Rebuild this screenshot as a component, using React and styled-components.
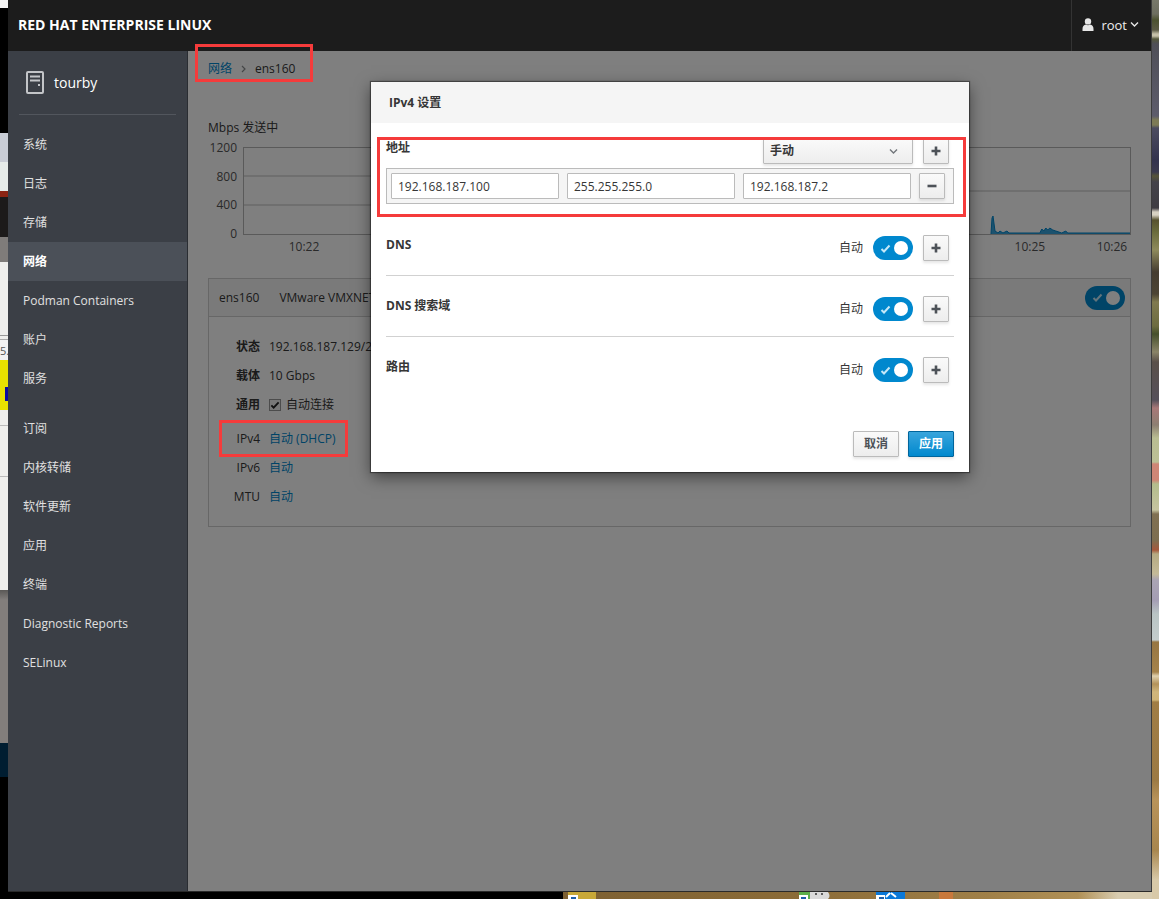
import React, { useState } from 'react';
import styled, { createGlobalStyle } from 'styled-components';

const GlobalStyle = createGlobalStyle`
  * {
    box-sizing: border-box;
  }

  body {
    margin: 0;
    font-family: "Open Sans", "Noto Sans CJK SC", sans-serif;
    font-size: 12px;
    line-height: 20px;
    color: #363636;
  }

  button, input, select {
    font: inherit;
    color: inherit;
    margin: 0;
  }

  a {
    color: #0088ce;
    text-decoration: none;
  }
`;

const Desktop = styled.div`
  display: grid;
  grid-template-columns: 8px 1fr 7px;
  grid-template-rows: 1fr 7px;
  min-height: 100vh;
`;

const LeftEdge = styled.div`
  grid-row: 1 / 3;
  overflow: hidden;
  padding-top: 341px;
  font-size: 11px;
  color: #555;
  background: linear-gradient(
    #f4f4f4 8px, #000 8px 133px, #c9cdd6 133px 162px, #e6ebe9 162px 191px,
    #8c2413 191px 197px, #1c1a1a 197px 237px, #7f7c7a 237px 262px, #efefed 262px 335px,
    #999 335px 336px, #efefed 336px 339px, #aaa 339px 340px, #f2f2f2 340px 360px,
    #e8e000 360px 410px, #efefed 410px 425px, #bbb 425px 426px, #efefed 426px 476px,
    #bbb 476px 477px, #efefed 477px 590px, #5a5856 590px, #827e7c 600px 743px,
    #001d31 743px 777px, #000 777px
  );
`;

const Flag = styled.div`
  width: 3px;
  height: 14px;
  margin: 26px 0 0 5px;
  background: #0a0aa0;
`;

const RightEdge = styled.div`
  grid-row: 1 / 3;
  grid-column: 3;
  background: linear-gradient(
    #77786a 0, #6d6e60 14px, #4c5230 20px, #5c5b45 30px, #c5c0a8 34px 36px, #55583c 39px,
    #4f4f58 44px, #5d5c6b 116px, #7d7b56 120px 125px, #4c4c60 128px, #33334e 160px,
    #3b3a4e 172px, #565438 176px, #44434a 182px, #3e3c42 208px, #d8d2c3 212px 215px,
    #57522f 220px, #6a6c3c 232px, #8e8a5c 250px, #453c30 272px, #4c4434 294px,
    #807a50 302px, #6d6c40 326px, #46502c 334px, #8a8468 352px, #5a504a 362px, #55505a 400px,
    #a87878 408px, #8d7f72 425px, #b9bd92 438px, #bcc096 462px, #cf8676 464px 480px,
    #b3bd8c 484px, #c6c4a0 510px, #807052 514px, #7d6e50 540px, #a5583c 550px, #b5aa82 554px,
    #c4ba98 574px, #aaa4b4 580px, #a49db4 600px, #b9c4c4 614px, #c4cccc 640px,
    #977642 642px, #a5834b 672px, #e0d1ae 676px, #b3925a 684px, #d0b67c 692px,
    #cfb477 700px, #a07d45 702px, #9c7a44 780px, #b8935a 800px, #a8864e 850px, #d8c9a8 880px
  );
`;

const BottomEdge = styled.div`
  grid-column: 2;
  display: grid;
  grid-template-columns: 555px 5px 28px 203px 31px 46px 29px 34px 14px 1fr;
  background: linear-gradient(90deg, #7d6032 555px, #8c6c38 800px, #a08048 980px, #b09056 1070px, #d8ccb0 1110px);
`;

const Tile = styled.div`
  background: ${({ color }) => color || 'transparent'};

  svg {
    display: block;
  }
`;

const Window = styled.div`
  display: grid;
  grid-template-columns: 180px 1fr;
  grid-template-rows: 51px 1fr;
  border-right: 1px solid #3c3c3c;
  border-bottom: 1px solid #2a2a2a;
`;

const TopBar = styled.header`
  grid-column: 1 / 3;
  display: flex;
  justify-content: space-between;
  align-items: stretch;
  background: #1c1c1c;
  color: #fff;
`;

const Brand = styled.div`
  padding: 15px 10px;
  font-size: 14px;
  font-weight: 700;
`;

const UserMenu = styled.button`
  display: flex;
  align-items: center;
  gap: 7px;
  padding: 0 12px 2px 10px;
  border: 0;
  border-left: 1px solid #333;
  background: transparent;
  color: #eee;
  font-size: 13px;

  svg:last-child {
    margin-left: -4px;
  }
`;

const Sidebar = styled.nav`
  background: #3b3f46;
  border-right: 1px solid #2a2d32;
  color: #e4e4e4;
`;

const Host = styled.a`
  display: flex;
  align-items: center;
  gap: 10px;
  height: 64px;
  margin: 0 11px 10px;
  padding-left: 7px;
  border-bottom: 1px solid #52565d;
  color: #fff;
  font-size: 14px;
`;

const NavList = styled.ul`
  list-style: none;
  margin: 0 0 11px;
  padding: 0;
`;

const NavLink = styled.a`
  display: block;
  padding: 10px 15px 9px;
  color: ${({ $active }) => ($active ? '#fff' : '#e0e0e0')};
  font-weight: ${({ $active }) => ($active ? 700 : 400)};
  background: ${({ $active }) => ($active ? '#4b5058' : 'transparent')};
`;

const Main = styled.main`
  position: relative;
  padding: 8px 20px 20px;
  background: #fff;
`;

const Highlight = styled.span`
  position: absolute;
  inset: ${({ $inset }) => $inset};
  z-index: 5;
  border: 3px solid #f53b3b;
  pointer-events: none;
`;

const Breadcrumb = styled.div`
  position: relative;
  display: inline-flex;
  align-items: center;
  gap: 9px;
`;

const Charts = styled.div`
  display: grid;
  grid-template-columns: 1fr 1fr;
  gap: 36px;
  margin-top: 39px;
`;

const ChartTitle = styled.div`
  height: 20px;
`;

const ChartBody = styled.div`
  display: grid;
  grid-template-columns: 29px 1fr;
  column-gap: 6px;
`;

const YAxis = styled.div`
  display: flex;
  flex-direction: column;
  justify-content: space-between;
  height: 106px;
  margin-bottom: -10px;
  text-align: right;
  color: #545454;
`;

const Plot = styled.svg`
  display: block;
  width: 100%;
  height: 88px;
  margin-top: 9px;
  border: 1px solid #b4b4b4;
`;

const XAxis = styled.div`
  grid-column: 2;
  display: grid;
  grid-template-columns: repeat(5, 1fr);
  height: 20px;
  margin: 2px -22px 0 20px;
  text-align: center;
  color: #545454;
`;

const Panel = styled.section`
  margin-top: 21px;
  border: 1px solid #cfcfcf;
`;

const PanelHeader = styled.div`
  display: flex;
  align-items: center;
  gap: 20px;
  height: 38px;
  padding: 0 5px 0 10px;
  background: #f5f5f5;
  border-bottom: 1px solid #cfcfcf;

  > :last-child {
    margin-left: auto;
  }
`;

const Details = styled.dl`
  margin: 0;
  padding: 15px 0;
`;

const DetailRow = styled.div`
  display: grid;
  grid-template-columns: 51px 1fr;
  gap: 9px;
  align-items: center;
  height: ${({ $tall }) => ($tall ? 34 : 29)}px;
  padding-bottom: ${({ $tall }) => ($tall ? 4 : 0)}px;

  dt {
    text-align: right;
    font-weight: ${({ $strong }) => ($strong ? 700 : 400)};
  }

  dd {
    margin: 0;
    justify-self: start;
  }
`;

const LinkCell = styled.dd`
  position: relative;
`;

const CheckLabel = styled.label`
  display: flex;
  align-items: center;
  gap: 5px;
`;

const CheckBox = styled.input`
  appearance: none;
  width: 12px;
  height: 12px;
  border: 1px solid #999;
  background: #f0f0f0;
`;

const CheckWrap = styled.span`
  display: grid;
  align-items: center;
  justify-items: center;

  > * {
    grid-area: 1 / 1;
  }
`;

const SwitchInput = styled.input`
  appearance: none;
  display: flex;
  align-items: center;
  justify-content: ${({ checked }) => (checked ? 'flex-end' : 'flex-start')};
  width: 40px;
  height: 24px;
  padding: 0 5px;
  border-radius: 12px;
  background: ${({ checked }) => (checked ? '#0088ce' : '#bbb')};

  &::before {
    content: "";
    width: 14px;
    height: 14px;
    border-radius: 50%;
    background: #fff;
  }
`;

const SwitchWrap = styled.span`
  display: grid;
  align-items: center;

  > * {
    grid-area: 1 / 1;
  }

  svg {
    margin-left: 7px;
    pointer-events: none;
  }
`;

const Backdrop = styled.div`
  position: absolute;
  inset: 0;
  z-index: 2;
  display: flex;
  justify-content: center;
  align-items: flex-start;
  padding: 31px 0 0 1px;
  background: rgba(0, 0, 0, 0.5);
`;

const Dialog = styled.div`
  width: 598px;
  max-width: 100%;
  background: #fff;
  box-shadow: 0 0 1px 1px rgba(0, 0, 0, 0.4), 0 5px 15px rgba(0, 0, 0, 0.5);
`;

const DialogTitle = styled.h2`
  margin: 0;
  padding: 11px 18px 10px;
  background: #f5f5f5;
  font-size: 12px;
  line-height: 20px;
`;

const DialogBody = styled.div`
  padding: 15px 15px 0;
`;

const AddressBlock = styled.div`
  position: relative;
  margin-bottom: 11px;
`;

const Setting = styled.div`
  display: flex;
  align-items: flex-start;
  padding: ${({ $first }) => ($first ? '0 5px 4px 0' : '20px 5px 14px 0')};
  border-bottom: ${({ $line }) => ($line ? '1px solid #d1d1d1' : '0')};
`;

const SettingName = styled.strong`
  flex: 1;
`;

const SettingControls = styled.div`
  display: flex;
  align-items: center;
  gap: 10px;
`;

const AutoLabel = styled.label`
  display: flex;
  align-items: center;
  gap: 10px;
  height: 26px;
`;

const SelectWrap = styled.span`
  display: grid;
  align-items: center;

  > * {
    grid-area: 1 / 1;
  }

  svg {
    justify-self: end;
    margin-right: 15px;
    pointer-events: none;
  }
`;

const Select = styled.select`
  appearance: none;
  width: 150px;
  height: 26px;
  padding: 0 6px;
  border: 1px solid #bbb;
  border-radius: 1px;
  background: linear-gradient(#fafafa, #ededed);
  box-shadow: 0 2px 3px rgba(3, 3, 3, 0.1);
  font-weight: 600;
`;

const Button = styled.button`
  height: 26px;
  padding: 0 10px;
  border: 1px solid ${({ $primary }) => ($primary ? '#00659c' : '#bbb')};
  border-radius: 1px;
  background: ${({ $primary }) => ($primary ? 'linear-gradient(#39a5dc, #0088ce)' : 'linear-gradient(#fafafa, #ededed)')};
  box-shadow: 0 2px 3px rgba(3, 3, 3, 0.1);
  color: ${({ $primary }) => ($primary ? '#fff' : '#4d5258')};
  font-weight: 600;
  line-height: 18px;
`;

const IconButton = styled(Button)`
  display: grid;
  place-items: center;
  width: 26px;
  padding: 0;
`;

const AddressRow = styled.div`
  display: flex;
  gap: 8px;
  padding: 4px 8px 4px 4px;
  border: 1px solid #bbb;
  background: #f5f5f5;
`;

const TextInput = styled.input`
  flex: 1;
  min-width: 0;
  height: 26px;
  padding: 0 6px;
  border: 1px solid #bbb;
  border-radius: 1px;
  background: #fff;
`;

const Footer = styled.div`
  display: flex;
  justify-content: flex-end;
  gap: 9px;
  padding: 34px 15px 15px;
`;

const mainMenu = ['系统', '日志', '存储', '网络', 'Podman Containers', '账户', '服务'];
const toolsMenu = ['订阅', '内核转储', '软件更新', '应用', '终端', 'Diagnostic Reports', 'SELinux'];

const traffic = 'M268 86 L269 70 L270 68 L272 83 L275 85 L277 83 L280 85 L284 83 L286 85 L317 85 L319 81 L321 83 L323 80 L325 82 L327 80 L330 82 L333 83 L339 85 L343 83 L345 85 L408 85 V87 H268 Z';

const CheckMark = ({ color = '#fff', size = 11 }) => (
  <svg width={size} height={size} viewBox="0 0 11 11" aria-hidden="true">
    <path d="M1.5 6 L4 8.5 L9.5 2.5" fill="none" stroke={color} strokeWidth="2" />
  </svg>
);

const Chevron = ({ color }) => (
  <svg width="9" height="7" viewBox="0 0 9 7" aria-hidden="true">
    <path d="M1 1.5 L4.5 5 L8 1.5" fill="none" stroke={color} strokeWidth="1.4" />
  </svg>
);

const PlusIcon = () => (
  <svg width="10" height="10" viewBox="0 0 10 10" aria-hidden="true">
    <path d="M5 0.5 V9.5 M0.5 5 H9.5" stroke="#4d5258" strokeWidth="2.6" />
  </svg>
);

const MinusIcon = () => (
  <svg width="10" height="10" viewBox="0 0 10 10" aria-hidden="true">
    <path d="M0.5 5 H9.5" stroke="#4d5258" strokeWidth="2.6" />
  </svg>
);

const HostIcon = () => (
  <svg width="18" height="23" viewBox="0 0 18 23" aria-hidden="true">
    <rect x="1" y="1" width="16" height="21" rx="1" fill="none" stroke="#c3c5c8" strokeWidth="2" />
    <path d="M4 5.5 H14 M4 9.5 H14" stroke="#c3c5c8" strokeWidth="2" />
    <rect x="12" y="13" width="2" height="2" fill="#c3c5c8" />
  </svg>
);

const UserIcon = () => (
  <svg width="12" height="13" viewBox="0 0 12 13" aria-hidden="true">
    <circle cx="6" cy="3.4" r="3.2" fill="#e6e6e6" />
    <path d="M0.5 13 V11 Q0.5 7 4 6.5 Q6 8 8 6.5 Q11.5 7 11.5 11 V13 Z" fill="#e6e6e6" />
  </svg>
);

const Switch = ({ label }) => {
  const [on, setOn] = useState(true);
  return (
    <SwitchWrap>
      <SwitchInput type="checkbox" role="switch" aria-label={label} checked={on} onChange={() => setOn(!on)} />
      {on && <CheckMark color="#c5e8f8" />}
    </SwitchWrap>
  );
};

const Menu = ({ items, active }) => (
  <NavList>
    {items.map((item) => (
      <li key={item}><NavLink href="#" $active={item === active}>{item}</NavLink></li>
    ))}
  </NavList>
);

const Chart = ({ title, ticks, lines, times, area }) => (
  <div>
    <ChartTitle>{title}</ChartTitle>
    <ChartBody>
      <YAxis>
        {ticks.map((tick) => <span key={tick}>{tick}</span>)}
      </YAxis>
      <Plot viewBox="0 0 408 86" preserveAspectRatio="none">
        {lines.map((y) => (
          <line key={y} x1="0" x2="408" y1={y} y2={y} stroke="#bdbdbd" />
        ))}
        {area && <path d={area} fill="#39a5dc" stroke="#0088ce" />}
      </Plot>
      <XAxis>
        {times.map((time, index) => <span key={index}>{time}</span>)}
      </XAxis>
    </ChartBody>
  </div>
);

const AutoSetting = ({ name, line }) => (
  <Setting $line={line}>
    <SettingName>{name}</SettingName>
    <SettingControls>
      <AutoLabel>
        自动
        <Switch />
      </AutoLabel>
      <IconButton aria-label="+"><PlusIcon /></IconButton>
    </SettingControls>
  </Setting>
);

const Ipv4Dialog = () => {
  const [address, setAddress] = useState(['192.168.187.100', '255.255.255.0', '192.168.187.2']);

  const handleChange = (index, value) => {
    setAddress(address.map((part, i) => (i === index ? value : part)));
  };

  return (
    <Dialog role="dialog" aria-labelledby="dialog-title">
      <DialogTitle id="dialog-title">IPv4 设置</DialogTitle>
      <DialogBody>
        <AddressBlock>
          <Setting $first>
            <SettingName id="address-label">地址</SettingName>
            <SettingControls>
              <SelectWrap>
                <Select aria-labelledby="address-label">
                  <option>手动</option>
                </Select>
                <Chevron color="#72767b" />
              </SelectWrap>
              <IconButton aria-label="+"><PlusIcon /></IconButton>
            </SettingControls>
          </Setting>
          <AddressRow>
            {address.map((part, index) => (
              <TextInput
                key={index}
                type="text"
                aria-labelledby="address-label"
                value={part}
                onChange={(e) => handleChange(index, e.target.value)}
              />
            ))}
            <IconButton aria-label="-"><MinusIcon /></IconButton>
          </AddressRow>
          <Highlight $inset="-1px -12px -13px -9px" />
        </AddressBlock>
        <AutoSetting name="DNS" line />
        <AutoSetting name="DNS 搜索域" line />
        <AutoSetting name="路由" />
      </DialogBody>
      <Footer>
        <Button>取消</Button>
        <Button $primary>应用</Button>
      </Footer>
    </Dialog>
  );
};

const App = () => {
  const [autoConnect, setAutoConnect] = useState(true);

  return (
    <Desktop>
      <GlobalStyle />
      <LeftEdge>
        5.
        <Flag />
      </LeftEdge>
      <Window>
        <TopBar>
          <Brand>RED HAT ENTERPRISE LINUX</Brand>
          <UserMenu>
            <UserIcon />
            root
            <Chevron color="#e6e6e6" />
          </UserMenu>
        </TopBar>
        <Sidebar>
          <Host href="#"><HostIcon />tourby</Host>
          <Menu items={mainMenu} active="网络" />
          <Menu items={toolsMenu} />
        </Sidebar>
        <Main>
          <Breadcrumb>
            <a href="#">网络</a>
            <svg width="5" height="8" viewBox="0 0 5 8" aria-hidden="true">
              <path d="M1 1 L4 4 L1 7" fill="none" stroke="#8b8d8f" strokeWidth="1.2" />
            </svg>
            <span>ens160</span>
            <Highlight $inset="-15px -18px -3px -13px" />
          </Breadcrumb>
          <Charts>
            <Chart
              title="Mbps 发送中"
              ticks={['1200', '800', '400', '0']}
              lines={[28, 57]}
              times={['10:22', '', '', '', '']}
            />
            <Chart
              ticks={[]}
              lines={[43]}
              times={['', '', '', '10:25', '10:26']}
              area={traffic}
            />
          </Charts>
          <Panel>
            <PanelHeader>
              <span>ens160</span>
              <span>VMware VMXNET3</span>
              <Switch label="ens160" />
            </PanelHeader>
            <Details>
              <DetailRow $strong><dt>状态</dt><dd>192.168.187.129/24</dd></DetailRow>
              <DetailRow $strong><dt>载体</dt><dd>10 Gbps</dd></DetailRow>
              <DetailRow $strong $tall>
                <dt>通用</dt>
                <dd>
                  <CheckLabel>
                    <CheckWrap>
                      <CheckBox type="checkbox" checked={autoConnect} onChange={() => setAutoConnect(!autoConnect)} />
                      {autoConnect && <CheckMark color="#222" size={10} />}
                    </CheckWrap>
                    自动连接
                  </CheckLabel>
                </dd>
              </DetailRow>
              <DetailRow>
                <dt>IPv4</dt>
                <LinkCell>
                  <a href="#">自动 (DHCP)</a>
                  <Highlight $inset="-9px -12px -8px -50px" />
                </LinkCell>
              </DetailRow>
              <DetailRow><dt>IPv6</dt><dd><a href="#">自动</a></dd></DetailRow>
              <DetailRow><dt>MTU</dt><dd><a href="#">自动</a></dd></DetailRow>
            </Details>
          </Panel>
          <Backdrop>
            <Ipv4Dialog />
          </Backdrop>
        </Main>
      </Window>
      <RightEdge />
      <BottomEdge>
        <Tile color="#000" />
        <Tile />
        <Tile color="#c8a838">
          <svg width="10" height="7"><path d="M0 3 H10 V7 H0 Z" fill="#fff" /><path d="M3 7 V5 H8 V7" fill="#1f5fa8" /></svg>
        </Tile>
        <Tile />
        <Tile>
          <svg width="31" height="7">
            <path d="M11 0 H29 Q32 4 29 7 H11 Z" fill="#d9d9d9" />
            <path d="M0 0 H11 V7 H0 Z" fill="#5cae4a" />
            <path d="M0 3 H9 V7 H0 Z" fill="#fff" />
            <path d="M2 7 V5 H7 V7" fill="#1f5fa8" />
            <circle cx="17" cy="2" r="1" fill="#333" />
            <circle cx="23" cy="2" r="1" fill="#333" />
          </svg>
        </Tile>
        <Tile />
        <Tile color="#0a78d8">
          <svg width="26" height="7">
            <path d="M0 3 H9 V7 H0 Z" fill="#fff" />
            <path d="M3 7 V5 H8 V7" fill="#1f5fa8" />
            <path d="M10 5 L14 1 M15 1 L20 5" fill="none" stroke="#fff" strokeWidth="2" />
          </svg>
        </Tile>
        <Tile />
        <Tile color="#c8783c" />
      </BottomEdge>
    </Desktop>
  );
};

export default App;
